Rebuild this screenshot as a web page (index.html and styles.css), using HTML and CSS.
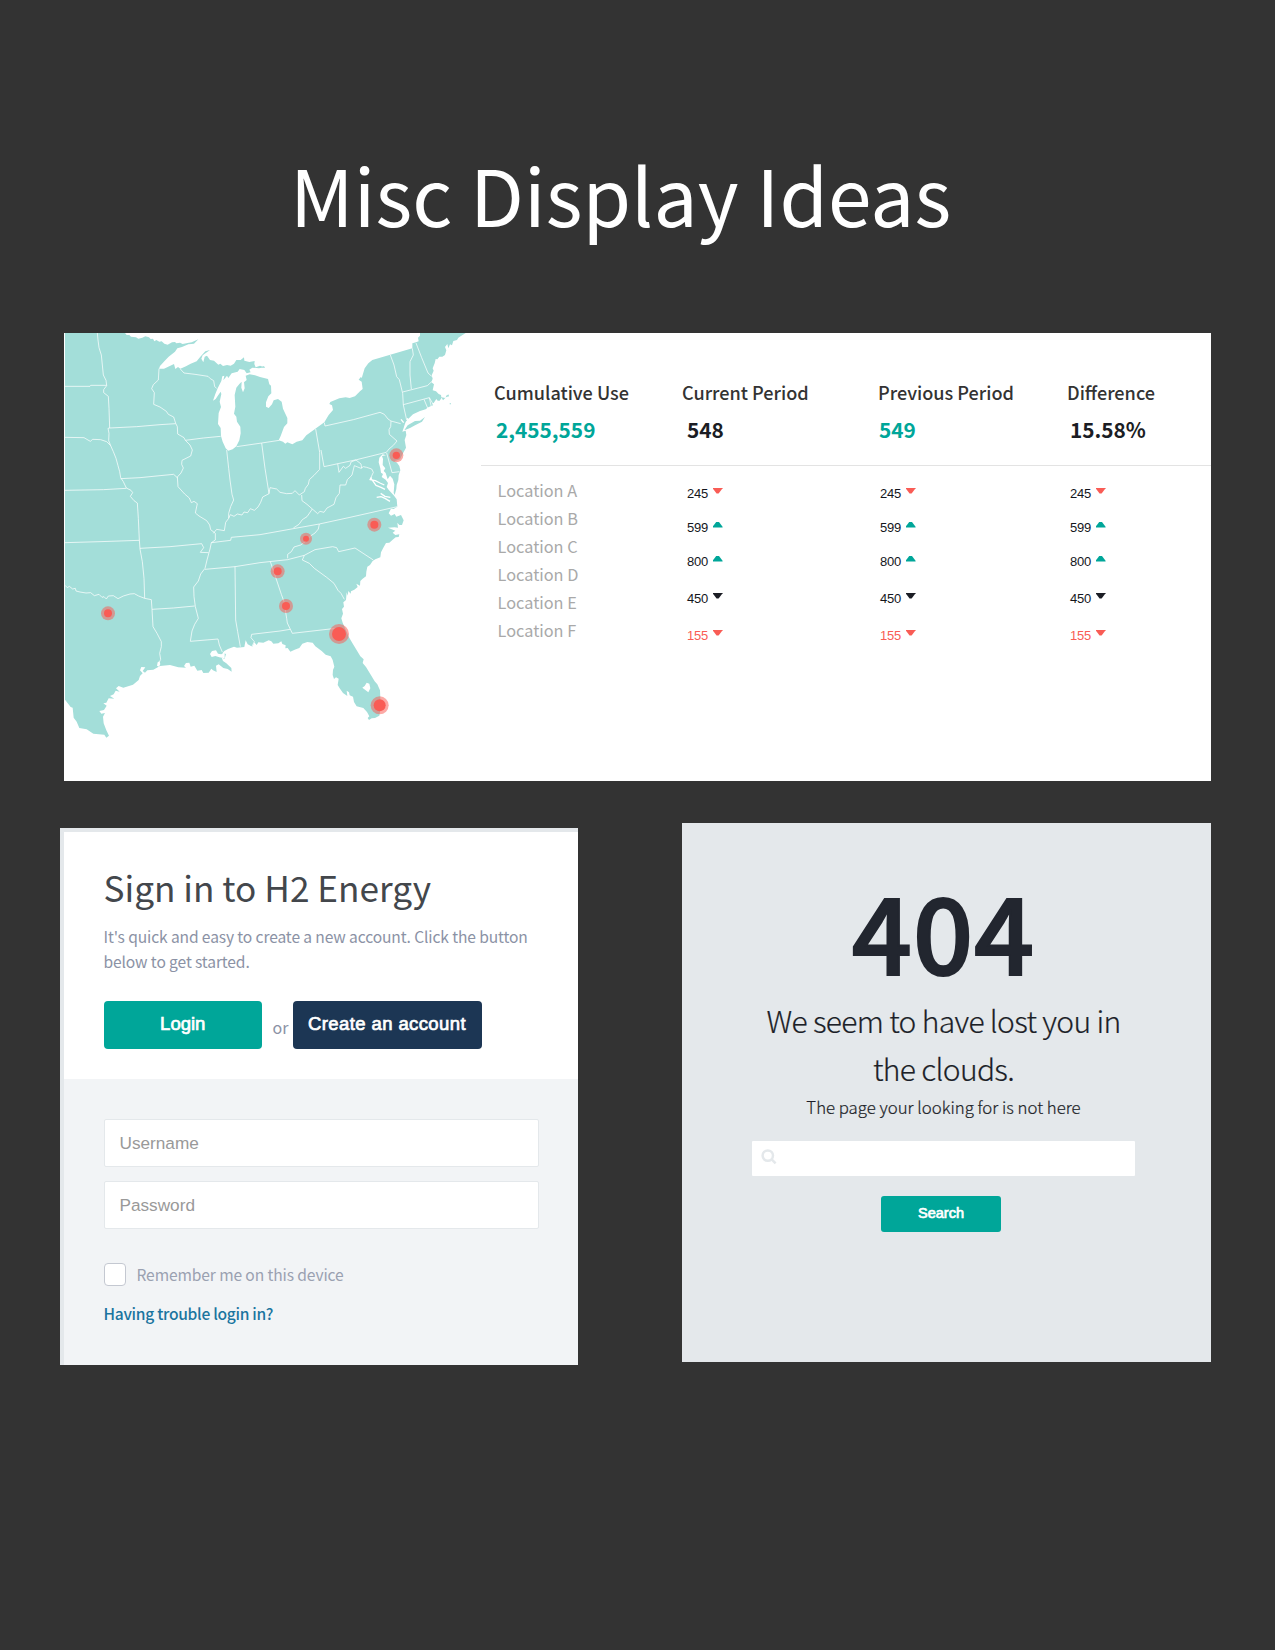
FILE: index.html
```html
<!DOCTYPE html>
<html lang="en">
<head>
<meta charset="utf-8">
<title>Misc Display Ideas</title>
<link rel="stylesheet" href="styles.css">
</head>
<body>
<h1 class="page-title">Misc Display Ideas</h1>

<section class="usage-card">
  <svg class="map" viewBox="12 24 1251 1344" width="417" height="448" aria-hidden="true">
    <path class="land" d="M15 24H195L200 30 208 30 213 35 228 37 235 41 247 38 256 34 267 37 272 42 279 41 283 49 289 45 298 50 305 49 313 56 323 59 336 52 345 51 349 55 360 53 368 57 379 55 395 52 415 43 402 56 385 58 366 66 352 70 345 80 326 95 313 109 300 123 297 131 312 131 342 117 346 132 354 126 361 131 378 124 392 116 410 109 421 95 436 79 450 75 428 91 424 101 430 112 434 95 441 92 450 105 462 107 475 119 481 116 489 123 501 120 512 122 522 116 529 105 542 105 552 97 553 107 568 111 584 108 583 117 587 127 600 122 613 127 597 130 577 128 568 134 572 142 560 145 553 135 539 132 533 140 515 145 505 159 501 152 490 166 493 152 487 154 484 168 473 190 466 207 459 227 467 222 475 210 482 200 484 207 479 230 483 246 476 264 474 297 482 309 483 333 488 350 497 370 505 377 518 373 529 364 538 346 542 325 541 305 531 290 529 275 522 266 526 245 524 210 529 188 538 177 545 170 544 188 549 202 554 190 552 172 560 165 557 152 569 148 585 151 600 156 624 162 628 178 633 182 634 205 625 214 618 232 618 245 626 249 636 238 641 226 654 222 665 230 669 251 682 279 682 295 672 306 662 333 656 346 669 350 676 356 682 352 697 358 710 350 727 346 739 331 765 312 793 292 806 270 819 255 816 241 808 237 811 231 838 220 857 217 869 219 885 214 900 199 908 192 905 170 896 164 903 155 905 160 914 130 925 115 937 105 1057 70 1057 55 1068 52 1076 49 1074 38 1080 32V24H1217L1203 33 1195 38 1191 45 1180 48 1176 61 1170 58 1165 70 1162 57 1155 66 1159 76 1155 90 1147 95 1138 95 1132 103 1127 102 1124 115 1118 130 1121 137 1115 151 1118 161 1114 172 1122 178 1118 196 1128 199 1136 207 1143 210 1144 217 1156 219 1160 211 1168 213 1158 217 1149 226 1145 218 1139 227 1133 227 1129 222 1121 234 1116 235 1119 241 1105 247 1097 253 1080 258 1059 268 1042 284 1037 291 1034 299 1030 312 1027 320 1037 317 1039 330 1034 345 1038 368 1029 385 1020 403 1003 409 1011 413 1018 423 1021 436 1016 450 1015 465 1010 480 1009 492 1004 510 1001 503 1003 478 998 461 990 452 983 463 977 444 971 438 976 430 968 420 969 402 966 393 978 391 968 388 958 398 956 412 961 430 963 443 969 447 965 456 977 464 984 474 980 486 987 496 1001 511 1010 523 1012 545 1001 552 993 551 986 565 993 572 1004 567 1009 575 1023 570 1031 586 1026 600 1018 600 1012 593 1014 608 1004 607 984 608 1006 617 998 623 1006 630 1018 628 1016 636 1007 637 998 644 988 653 978 654 970 668 963 682 961 697 946 703 938 708 930 720 922 725 919 740 918 754 908 761 901 768 900 782 889 776 893 786 883 794 873 799 872 806 865 798 863 812 860 802 858 825 850 832 852 845 846 852 849 866 844 880 848 893 866 935 877 954 892 979 901 994 911 1003 908 1014 918 1026 934 1052 944 1069 952 1078 960 1096 961 1120 962 1150 958 1172 945 1179 935 1180 927 1185 923 1179 928 1174 921 1161 910 1149 890 1144 882 1131 879 1115 869 1111 867 1102 860 1097 862 1113 849 1104 840 1091 833 1080 836 1061 828 1057 822 1062 818 1050 819 1035 823 1025 818 1005 812 994 797 989 785 978 766 964 758 953 742 951 727 956 718 969 704 974 691 980 683 969 676 970 677 961 667 957 664 949 655 955 640 956 634 949 626 946 610 953 595 952 590 960 583 952 577 965 563 958 557 946 553 966 531 968 522 965 504 972 493 978 488 983 498 987 494 1001 485 998 489 1008 499 1015 514 1029 515 1040 503 1032 490 1029 476 1018 468 1022 470 1041 459 1036 454 1031 446 1043 430 1044 425 1035 412 1037 403 1022 392 1025 388 1013 378 1014 372 1023 378 1028 355 1027 330 1020 300 1023 280 1034 262 1036 255 1043 248 1038 256 1027 244 1026 240 1036 248 1045 240 1053 236 1065 219 1079 190 1088 176 1083 168 1090 179 1100 167 1097 161 1108 150 1113 163 1121 146 1120 139 1133 130 1135 140 1142 132 1155 118 1158 124 1166 135 1164 129 1175 131 1195 139 1216 147 1232 139 1238 133 1229 100 1226 80 1213 58 1209 50 1190 41 1178 38 1148 32 1146 15 1124Z"/>
    <path class="land" d="M1033 316 1043 301 1065 288 1080 287 1095 276 1086 290 1068 299 1050 309ZM604 127l8-4 3 6zM1160 212l5-4 2 6zM1169 235h4v3h-4z"/>
    <path class="water" d="M920 1073 928 1076 931 1090 925 1102 917 1096 907 1088 914 1083ZM450 987 456 978 468 976 474 986 484 988 494 981 494 1000 478 997 466 993 455 996ZM291 1022l2-10 5-3 3 8-4 8z"/>
    <path class="bay" d="M931 458 940 470 948 481 963 487 975 493M935 457 930 464 946 467 960 474 973 480M950 517 963 515 975 520 990 529M962 505 975 514 991 517M1042 280l4 10M1023 283l8 10"/>
    <g class="borders">
      <path d="M112 24 114 45 117 68 124 90 127 120 130 150 138 166 140 182 131 194 131 203 145 214 147 250 149 309 144 310 147 325 146 347 152 362 160 380 168 400 174 422 179 440 182 458 190 470 199 489 213 496 218 503 211 514 222 527 232 534 235 580 238 645 240 672 247 710 252 760 254 820 274 824 276 853 279 905 291 925 304 950 304 965 299 985 302 1003 296 1016"/>
      <path d="M15 184 90 184 92 181 140 181M15 337 72 338 84 345 91 349 98 343 122 344 140 350 152 362M15 496 130 494 199 490M15 653 120 650 238 646M15 781 22 788 28 784 38 792 46 790 48 798 60 801 78 804 92 803 103 812 117 808 126 817 132 815 139 822 145 813 160 812 174 821 190 813 210 807 223 806 236 813 254 820"/>
      <path d="M149 309 230 305 300 299 347 296M182 461 240 458 300 452 341 448 353 459"/>
      <path d="M297 131 295 165 280 179 275 191 283 203 281 238 300 246 319 259 325 268 341 276 347 295 352 305 353 327 372 338 376 346 390 360 397 375 392 393 366 406 365 418 370 429 363 444 352 456 354 485 374 507 388 519 394 533 402 529 412 536 406 564 417 573 440 587 449 600 452 614 466 625 466 645 454 653 450 672 447 683 441 705 435 730 422 747 415 768 401 786 402 815 406 845 415 880 404 898 396 918 391 949 474 942 478 960 487 981"/>
      <path d="M361 132 372 144 405 148 444 154 451 161 461 167 464 185 470 190M376 346 430 339 482 334M500 375 506 430 510 465 516 508 521 525 512 545 506 565 506 580 497 592 493 617 470 613 460 625M605 354 615 430 627 506 608 516 602 532 594 546 583 556 571 551 563 563 552 561 546 570 532 567 522 574 511 569 506 580M530 365 605 354 658 346"/>
      <path d="M627 506 630 488 650 492 660 502 680 506 697 505 705 497 718 510 733 500 736 490 745 478 748 464 762 451 779 433 779 382 767 312M725 510 726 527 741 538 757 552 741 575 727 584 717 598 700 609M757 552 773 566 780 559 792 562 801 549 822 538 828 518 838 505 840 480 857 480 862 464 876 450 883 422 903 430 910 425 920 427 935 432 940 442 933 457"/>
      <path d="M793 293 795 303 880 284 960 262 973 268 984 282 993 288 1022 296M993 288 992 305 987 314 988 328 1011 348 1000 361 987 372 979 382 890 404 792 425 783 375M833 416 837 442 850 424 857 430 870 421 873 411 888 405 903 417 905 430M980 384 996 443 1018 440"/>
      <path d="M991 90 1002 120 1010 155 1018 164 1028 205 1030 240 1040 285M1057 70 1060 90 1050 110 1050 150 1054 192M1068 54 1085 98 1104 144 1115 154M1028 201 1102 182 1115 170M1030 239 1108 218 1118 235M1092 223 1105 254M1108 218 1115 250"/>
      <path d="M454 653 512 646 514 637 600 629 700 611 778 597 870 577 1012 545M240 670 330 665 425 656 431 668 421 682 446 683M435 733 525 725 600 713 683 704 733 691 765 674 818 665 830 668 836 680 885 669 940 705"/>
      <path d="M778 597 775 612 765 624 750 634 738 648 722 660 702 666 694 680 683 688 683 700M733 691 727 705 748 715 763 730 800 757 822 775 834 796 843 805 853 823"/>
      <path d="M525 725 527 885 533 920 541 965M631 710 648 760 664 808 672 830 680 880 682 894 697 925 810 912 838 910M575 966 583 950 573 938 575 928 660 918 690 913M276 853 340 849 404 843"/>
    </g>
    <g class="pins">
      <g><circle class="halo" cx="1009" cy="391" r="21"/><circle cx="1009" cy="391" r="11"/></g>
      <g><circle class="halo" cx="943" cy="599" r="21"/><circle cx="943" cy="599" r="12"/></g>
      <g><circle class="halo" cx="738" cy="641" r="18"/><circle cx="738" cy="641" r="9"/></g>
      <g><circle class="halo" cx="653" cy="739" r="21"/><circle cx="653" cy="739" r="12"/></g>
      <g><circle class="halo" cx="678" cy="843" r="21"/><circle cx="678" cy="843" r="12"/></g>
      <g><circle class="halo" cx="837" cy="927" r="30"/><circle cx="837" cy="927" r="21"/></g>
      <g><circle class="halo" cx="959" cy="1141" r="27"/><circle cx="959" cy="1141" r="18"/></g>
      <g><circle class="halo" cx="144" cy="865" r="21"/><circle cx="144" cy="865" r="12"/></g>
    </g>
  </svg>

  <div class="usage">
    <div class="summary">
      <div><h2>Cumulative Use</h2><p class="total teal">2,455,559</p></div>
      <div><h2>Current Period</h2><p class="total indent">548</p></div>
      <div><h2>Previous Period</h2><p class="total teal flush">549</p></div>
      <div><h2>Difference</h2><p class="total diff">15.58%</p></div>
    </div>
    <div class="details">
      <ul class="locations">
        <li>Location A</li><li>Location B</li><li>Location C</li><li>Location D</li><li>Location E</li><li>Location F</li>
      </ul>
      <ul class="values">
        <li>245<i class="down red"></i></li><li>599<i class="up"></i></li><li>800<i class="up"></i></li><li class="spaced">450<i class="down"></i></li><li class="spaced alert">155<i class="down red"></i></li>
      </ul>
      <ul class="values">
        <li>245<i class="down red"></i></li><li>599<i class="up"></i></li><li>800<i class="up"></i></li><li class="spaced">450<i class="down"></i></li><li class="spaced alert">155<i class="down red"></i></li>
      </ul>
      <ul class="values">
        <li>245<i class="down red"></i></li><li>599<i class="up"></i></li><li>800<i class="up"></i></li><li class="spaced">450<i class="down"></i></li><li class="spaced alert">155<i class="down red"></i></li>
      </ul>
    </div>
  </div>
</section>

<div class="cards">
  <section class="signin">
    <div class="signin-top">
      <h2>Sign in to H2 Energy</h2>
      <p>It's quick and easy to create a new account. Click the button<br>below to get started.</p>
      <div class="actions">
        <button class="btn login">Login</button>
        <span class="or">or</span>
        <button class="btn create">Create an account</button>
      </div>
    </div>
    <form class="signin-form">
      <input class="field" type="text" placeholder="Username">
      <input class="field" type="password" placeholder="Password">
      <label class="remember"><span class="check"></span>Remember me on this device</label>
      <a class="trouble">Having trouble login in?</a>
    </form>
  </section>

  <section class="missing">
    <h2>404</h2>
    <p class="lead">We seem to have lost you in<br>the clouds.</p>
    <p class="note">The page your looking for is not here</p>
    <div class="search">
      <svg width="16" height="16" viewBox="0 0 16 16" aria-hidden="true"><circle cx="6.8" cy="6.6" r="5.2"/><path d="M10.4 10.2 14.6 14.4"/></svg>
    </div>
    <button class="btn find">Search</button>
  </section>
</div>
</body>
</html>
```
FILE: styles.css
```css
* { box-sizing: border-box; }

body {
  margin: 0;
  min-height: 1650px;
  background: #333;
  font-family: "Noto Sans CJK SC", "Noto Sans", sans-serif;
}

h1, h2, p, ul { margin: 0; padding: 0; font-weight: 400; }
ul { list-style: none; }

.page-title {
  padding: 137px 0 0 290px;
  color: #fff;
  font-size: 78.4px;
  letter-spacing: .1px;
  line-height: 112px;
}

/* Usage map and table */
.usage-card {
  display: flex;
  width: 1147px;
  height: 448px;
  margin: 84px 0 0 64px;
  background: #fff;
}

.map { flex: none; display: block; }
.land { fill: #a3ded9; }
.water { fill: #fff; }
.bay { fill: none; stroke: #fff; stroke-width: 4; stroke-linejoin: round; }
.borders { fill: none; stroke: #fff; stroke-opacity: .72; stroke-width: 3; stroke-linejoin: round; }
.pins circle { fill: #f95c55; }
.pins .halo { fill-opacity: .52; }

.usage { flex: 1; }

.summary {
  display: grid;
  grid-template-columns: 188px 196px 189px 1fr;
  height: 133px;
  padding: 46.4px 0 0 13px;
  border-bottom: 1px solid #e3e3e3;
}

.summary h2 {
  color: #333;
  font-size: 18.1px;
  font-weight: 500;
  line-height: 26px;
}

.total {
  padding: 8.5px 0 0 2px;
  color: #1b1d24;
  font-size: 20.8px;
  font-weight: 700;
  line-height: 30px;
}
.total.indent { padding-left: 5px; }
.total.flush { padding-left: 1px; }
.total.diff { padding-left: 3px; }
.teal { color: #00a699; }

.details {
  display: grid;
  grid-template-columns: 189.4px 193px 190px 1fr;
  padding: 10px 0 0 16.6px;
}

.locations {
  color: #a9a9a9;
  font-size: 16.3px;
  line-height: 28px;
}

.values {
  padding-top: .5px;
  color: #14161c;
  font: 13px/34px "Liberation Sans", Arial, sans-serif;
  letter-spacing: -.2px;
}
.values .spaced { margin-top: 3px; }
.values .alert { color: #f95c55; }

.values i {
  display: inline-block;
  width: 10px;
  height: 6px;
  margin-left: 4.5px;
  background: #1b1d24;
  vertical-align: 4px;
}
.values .down { clip-path: polygon(0 0, 100% 0, 100% 12%, 60% 100%, 40% 100%, 0 12%); }
.values .up { background: #00a699; clip-path: polygon(40% 0, 60% 0, 100% 88%, 100% 100%, 0 100%, 0 88%); }
.values .red { background: #f95c55; }

/* Lower cards */
.cards {
  display: flex;
  align-items: flex-start;
  gap: 104px;
  padding: 42px 0 0 60px;
}

.btn {
  padding: 0;
  border: 0;
  border-radius: 4px;
  background: #00a699;
  color: #fff;
  font-family: "Liberation Sans", Arial, sans-serif;
  -webkit-text-stroke: .7px #fff;
}

.signin {
  width: 518px;
  height: 537px;
  margin-top: 5px;
  border-top: 4px solid #e4e8eb;
  border-left: 4px solid #e4e8eb;
  background: #f2f4f6;
}

.signin-top {
  height: 247px;
  padding: 33.3px 0 0 39.5px;
  background: #fff;
}

.signin-top h2 {
  color: #43474c;
  font-size: 35.2px;
  line-height: 44px;
}

.signin-top p {
  padding-top: 14.4px;
  color: #8b92a5;
  font-size: 15.6px;
  letter-spacing: -.12px;
  line-height: 25px;
  white-space: nowrap;
}

.actions { display: flex; padding-top: 27px; }
.login, .create { height: 48px; padding-bottom: 2px; font-size: 18.5px; }
.login { width: 158.5px; }
.create { width: 189px; background: #1c3654; letter-spacing: .4px; }
.or {
  width: 30.5px;
  padding: 14px 0 0 10.5px;
  color: #8b92a5;
  font-size: 16px;
  line-height: 24px;
}

.signin-form { padding: 39.5px 39px 0 39.5px; }

.field {
  display: block;
  width: 435.5px;
  height: 48.5px;
  margin-bottom: 13.5px;
  padding: 1px 0 0 15px;
  border: 1.5px solid #e4e8eb;
  border-radius: 2px;
  background: #fff;
  font: 17.2px "Liberation Sans", Arial, sans-serif;
}
.field::placeholder { color: #999; }

.remember {
  display: flex;
  gap: 10.5px;
  padding-top: 20.5px;
  color: #9aa1b1;
  font-size: 15.6px;
  letter-spacing: -.12px;
  line-height: 23px;
}

.check {
  width: 22.5px;
  height: 23px;
  border: 1.5px solid #c4c8d1;
  border-radius: 4px;
  background: #fff;
}

.trouble {
  display: block;
  padding-top: 15px;
  color: #1b759f;
  font-size: 15.6px;
  font-weight: 500;
  letter-spacing: -.3px;
  line-height: 24px;
}

.missing {
  display: flex;
  flex-direction: column;
  align-items: center;
  width: 529px;
  height: 539px;
  padding: 46.2px 6px 0 0;
  background: #e4e8eb;
  color: #1c1f28;
  text-align: center;
}

.missing h2 {
  color: #22262f;
  font-size: 105.5px;
  font-weight: 500;
  letter-spacing: 1px;
  line-height: 120px;
  -webkit-text-stroke: 2px #22262f;
}

.lead {
  padding-top: 8px;
  font-size: 30px;
  font-weight: 300;
  letter-spacing: -.68px;
  line-height: 47.6px;
}

.note {
  padding-top: 2.4px;
  font-size: 16.8px;
  font-weight: 300;
  line-height: 24px;
}

.lead, .note { -webkit-text-stroke: .2px #1c1f28; }

.search {
  width: 383px;
  height: 35px;
  margin-top: 22.3px;
  padding: 8px 9px;
  border-radius: 1px;
  background: #fff;
}
.search svg { display: block; fill: none; stroke: #e4e8eb; stroke-width: 2.5; }

.find {
  width: 120px;
  height: 36px;
  margin: 20px 5px 0 0;
  padding-bottom: 2px;
  border-radius: 3px;
  font-size: 14.5px;
}
```
